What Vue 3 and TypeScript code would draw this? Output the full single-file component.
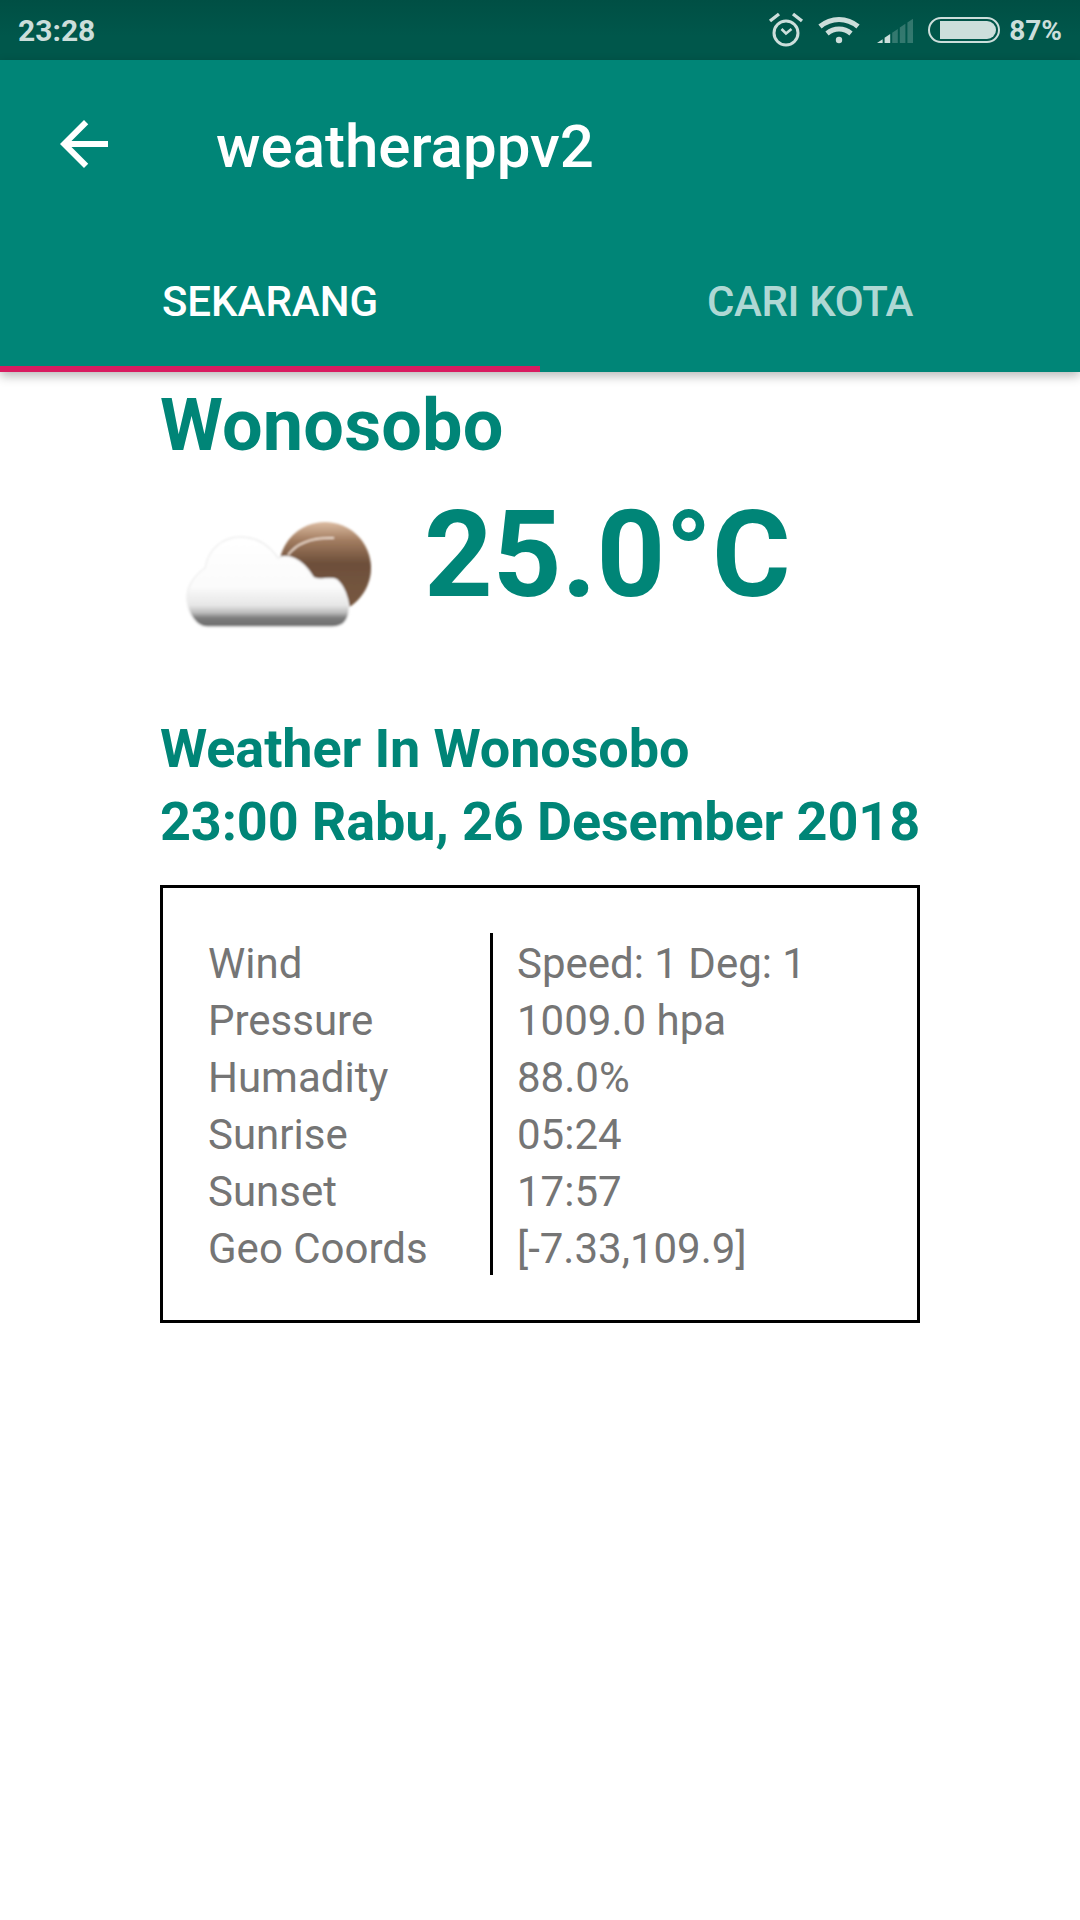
<template>
  <div class="screen">
    <div class="status-bar">
      <span class="clock">23:28</span>
      <div class="status-right">
        <svg class="status-icons" width="108" height="60" viewBox="0 0 108 60">
          <g fill="none" stroke="#ccdedb" stroke-width="3">
            <circle cx="19" cy="33" r="12" />
            <path d="M14.500 29l4.500 4.500 5.500-4.500" stroke-width="2.6" />
            <path d="M3 21l9-7M26 14l9 7" stroke-width="3.4" />
            <path d="M53 26.5c11-9.500 27-9.500 38 0" stroke-width="5" />
            <path d="M60 33.500c7-6 17-6 24 0" stroke-width="5" />
          </g>
          <circle cx="72" cy="40" r="3.200" fill="#ccdedb" />
        </svg>
        <svg class="signal" width="40" height="60" viewBox="0 0 40 60">
          <polygon
            v-for="(bar, i) in signalBars"
            :key="i"
            :points="bar"
            fill="#ccdedb"
            :opacity="i < 2 ? 1 : 0.25"
          />
        </svg>
        <div class="battery"><div class="battery-fill"></div></div>
        <span class="percent">87%</span>
      </div>
    </div>

    <header class="app-bar">
      <div class="toolbar">
        <svg class="back" width="72" height="72" viewBox="0 0 24 24">
          <path fill="#fff" d="M20 11H7.830l5.590-5.590L12 4l-8 8 8 8 1.410-1.410L7.830 13H20v-2z" />
        </svg>
        <h1 class="title">weatherappv2</h1>
      </div>
      <nav class="tabs">
        <div class="tab active">Sekarang</div>
        <div class="tab">Cari Kota</div>
      </nav>
    </header>

    <main class="content">
      <h2 class="city">Wonosobo</h2>
      <div class="current">
        <svg class="weather-icon" width="260" height="170" viewBox="0 0 260 170">
          <defs>
            <linearGradient id="sunGrad" x1="0" y1="0" x2="0" y2="1">
              <stop offset="0" stop-color="#dcbca2" />
              <stop offset="0.2" stop-color="#a27c60" />
              <stop offset="0.45" stop-color="#6d4f3a" />
              <stop offset="1" stop-color="#7a5a43" />
            </linearGradient>
            <linearGradient id="cloudGrad" x1="0" y1="0" x2="0" y2="1">
              <stop offset="0" stop-color="#ffffff" />
              <stop offset="0.55" stop-color="#fbfbfb" />
              <stop offset="0.76" stop-color="#e6e6e6" />
              <stop offset="0.84" stop-color="#bcbcbc" />
              <stop offset="0.9" stop-color="#7c7c7c" />
              <stop offset="1" stop-color="#6e6e6e" />
            </linearGradient>
            <filter id="soft" x="-10%" y="-10%" width="120%" height="120%">
              <feGaussianBlur stdDeviation="1.200" />
            </filter>
          </defs>
          <g filter="url(#soft)">
            <circle cx="165" cy="78" r="46" fill="url(#sunGrad)" />
            <path d="M128 65C136 54 150 47 174 48" fill="none" stroke="#e8d6c8" stroke-width="2" />
            <path
              d="M27 110C26 96 36 84 45 78 48 60 62 47 80 47 98 47 110 56 118 68 128 64 142 68 153 87 158 92 170 86 177 90 184 96 188 108 189 118 189 130 183 137 172 137H47C36 137 28 124 27 110Z"
              fill="url(#cloudGrad)"
              stroke="#efefef"
              stroke-width="1.500"
            />
          </g>
        </svg>
        <div class="temp">25.0°C</div>
      </div>
      <h3 class="heading">Weather In Wonosobo<br />23:00 Rabu, 26 Desember 2018</h3>
      <div class="details">
        <div class="labels">
          <div v-for="row in rows" :key="row.label" class="cell">{{ row.label }}</div>
        </div>
        <div class="values">
          <div v-for="row in rows" :key="row.label" class="cell">{{ row.value }}</div>
        </div>
      </div>
    </main>
  </div>
</template>

<script setup lang="ts">
interface Row {
  label: string
  value: string
}

const rows: Row[] = [
  { label: 'Wind', value: 'Speed: 1 Deg: 1' },
  { label: 'Pressure', value: '1009.0 hpa' },
  { label: 'Humadity', value: '88.0%' },
  { label: 'Sunrise', value: '05:24' },
  { label: 'Sunset', value: '17:57' },
  { label: 'Geo Coords', value: '[-7.33,109.9]' }
]

// five bars rising along one slanted line
const signalBars: string[] = [0, 1, 2, 3, 4].map((i) => {
  const left = 2 + i * 7.6
  const right = left + 5.6
  const top = (x: number) => 43 - ((x - 2) * 25) / 37
  return `${left},43 ${right},43 ${right},${top(right)} ${left},${top(left)}`
})
</script>

<style scoped>
.screen {
  width: 1080px;
  height: 1920px;
  background: #fff;
  overflow: hidden;
  font-family: Roboto, "Liberation Sans", sans-serif;
}

.status-bar {
  height: 60px;
  background: linear-gradient(#004f44, #00574b 60%);
  display: flex;
  align-items: center;
  justify-content: space-between;
  color: #ccdedb;
  font-weight: 700;
}

.clock {
  margin-left: 18px;
  font-size: 30px;
}

.status-right {
  display: flex;
  align-items: center;
  margin-right: 18px;
}

.signal {
  margin-right: 13px;
}

.battery {
  width: 72px;
  height: 26px;
  box-sizing: border-box;
  border: 2.5px solid #ccdedb;
  border-radius: 13px;
  padding: 2px 2px 2px 10px;
  margin-right: 9px;
}

.battery-fill {
  height: 100%;
  background: #ccdedb;
  border-radius: 0 9px 9px 0;
}

.percent {
  font-size: 28px;
}

.app-bar {
  background: #008577;
  box-shadow: 0 4px 10px rgba(0, 0, 0, 0.28);
  position: relative;
}

.toolbar {
  height: 168px;
  display: flex;
  align-items: center;
  padding-left: 48px;
}

.title {
  margin: 5px 0 0 96px;
  color: #fff;
  font-size: 60px;
  font-weight: 500;
}

.tabs {
  display: flex;
  height: 144px;
}

.tab {
  flex: 1;
  display: flex;
  align-items: center;
  justify-content: center;
  font-size: 42px;
  font-weight: 500;
  text-transform: uppercase;
  color: rgba(255, 255, 255, 0.7);
  box-sizing: border-box;
  border-bottom: 6px solid transparent;
  padding-top: 8px;
  letter-spacing: -0.35px;
}

.tab.active {
  color: #fff;
  border-bottom-color: #d81b60;
  letter-spacing: 0;
}

.content {
  width: 760px;
  margin: 0 auto;
  padding-top: 12px;
  color: #008577;
}

.city {
  margin: 0;
  font-size: 72px;
  font-weight: 700;
  line-height: 84px;
  letter-spacing: 0.15px;
}

.current {
  display: flex;
  align-items: center;
  height: 170px;
  margin-top: 22px;
}

.weather-icon {
  flex: none;
}

.temp {
  font-size: 120px;
  font-weight: 700;
  line-height: 140px;
  margin: -40px 0 0 4px;
}

.heading {
  margin: 52px 0 0;
  font-size: 54px;
  font-weight: 700;
  line-height: 73px;
  white-space: nowrap;
  letter-spacing: -0.12px;
}

.details {
  margin-top: 27px;
  border: 3px solid #000;
  padding: 45px;
  display: flex;
  font-size: 42px;
  color: #757575;
}

.cell {
  height: 57px;
  line-height: 62px;
}

.labels {
  width: 282px;
  box-sizing: border-box;
}

.values {
  border-left: 3px solid #000;
  padding-left: 24px;
}
</style>
